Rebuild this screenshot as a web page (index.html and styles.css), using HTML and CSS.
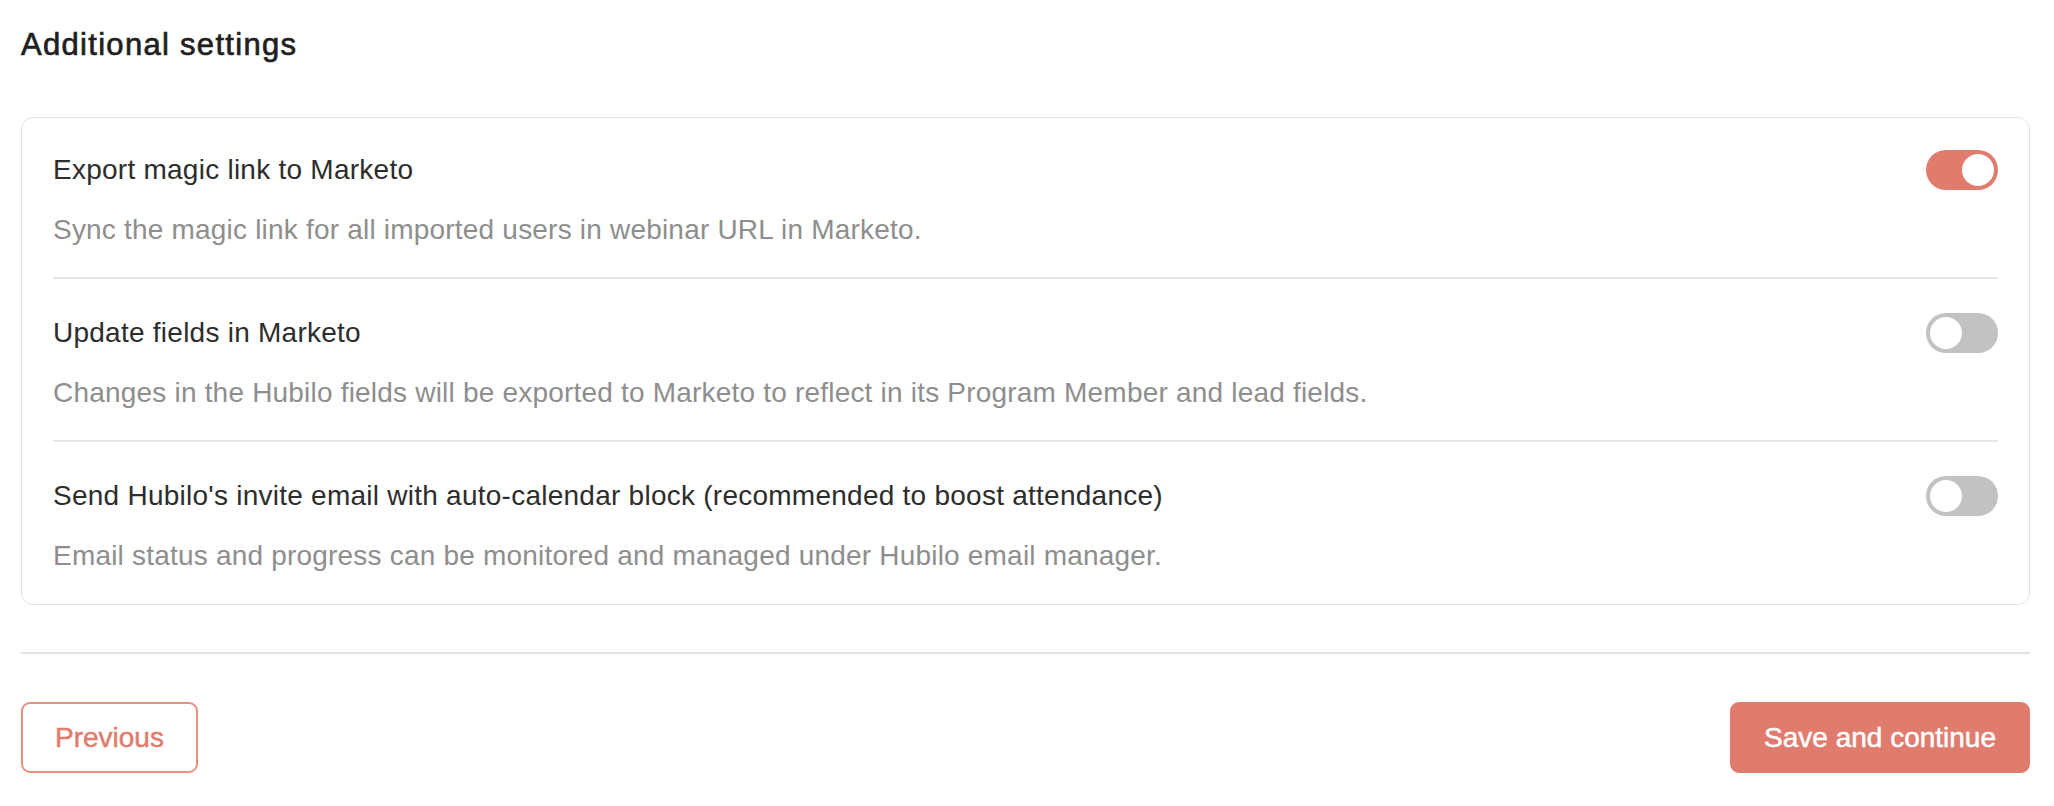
FILE: index.html
```html
<!DOCTYPE html>
<html lang="en">
<head>
<meta charset="utf-8">
<title>Additional settings</title>
<link rel="stylesheet" href="styles.css">
</head>
<body>
<main class="page">
  <h2 class="section-title">Additional settings</h2>

  <section class="settings-card">
    <div class="setting">
      <div class="setting-head">
        <span class="setting-name">Export magic link to Marketo</span>
        <span class="switch is-on" role="switch" aria-checked="true"><span class="knob"></span></span>
      </div>
      <p class="setting-desc">Sync the magic link for all imported users in webinar URL in Marketo.</p>
    </div>
    <div class="setting">
      <div class="setting-head">
        <span class="setting-name">Update fields in Marketo</span>
        <span class="switch" role="switch" aria-checked="false"><span class="knob"></span></span>
      </div>
      <p class="setting-desc">Changes in the Hubilo fields will be exported to Marketo to reflect in its Program Member and lead fields.</p>
    </div>
    <div class="setting">
      <div class="setting-head">
        <span class="setting-name">Send Hubilo's invite email with auto-calendar block (recommended to boost attendance)</span>
        <span class="switch" role="switch" aria-checked="false"><span class="knob"></span></span>
      </div>
      <p class="setting-desc">Email status and progress can be monitored and managed under Hubilo email manager.</p>
    </div>
  </section>

  <footer class="actions">
    <button class="btn btn-outline" type="button">Previous</button>
    <button class="btn btn-primary" type="button">Save and continue</button>
  </footer>
</main>
</body>
</html>
```

FILE: styles.css
```css
* {
  box-sizing: border-box;
}

html,
body {
  margin: 0;
  background: #ffffff;
}

body {
  font-family: "Liberation Sans", Arial, Helvetica, sans-serif;
  color: #2d2d2d;
}

.page {
  padding: 27px 24px 0 21px;
}

/* medium-weight heading: regular face thickened slightly */
.section-title {
  margin: 0;
  font-size: 31px;
  line-height: 36px;
  font-weight: 400;
  letter-spacing: 1.3px;
  -webkit-text-stroke: 0.7px #1f1f1f;
  color: #1f1f1f;
}

.settings-card {
  margin-top: 54px;
  border: 1.5px solid #e2e2e2;
  border-radius: 12px;
  padding: 0 31px;
}

.setting {
  padding: 32px 0 30px;
  border-bottom: 2px solid #e6e6e6;
}

.setting + .setting {
  padding-top: 34px;
}

.setting:last-child {
  border-bottom: none;
  padding-bottom: 31px;
}

.setting-head {
  display: flex;
  align-items: center;
  justify-content: space-between;
  gap: 24px;
}

.setting-name {
  font-size: 28px;
  line-height: 36px;
  letter-spacing: 0.25px;
  color: #2d2d2d;
}

.setting-desc {
  margin: 23px 0 0;
  font-size: 28px;
  line-height: 34px;
  letter-spacing: 0.2px;
  color: #8e8e8e;
}

/* toggle switch */
.switch {
  position: relative;
  flex: none;
  width: 72px;
  height: 40px;
  border-radius: 20px;
  background: #c2c2c2;
}

.switch .knob {
  position: absolute;
  top: 4px;
  left: 4px;
  width: 32px;
  height: 32px;
  border-radius: 50%;
  background: #ffffff;
}

.switch.is-on {
  background: #e07c6e;
}

.switch.is-on .knob {
  left: 36px;
}

.actions {
  margin-top: 47px;
  border-top: 2px solid #e3e3e3;
  padding-top: 48px;
  display: flex;
  justify-content: space-between;
}

.btn {
  height: 71px;
  padding: 0 32px;
  border-radius: 9px;
  font-family: inherit;
  font-size: 28px;
  font-weight: 400;
  -webkit-text-stroke: 0.5px currentColor;
  cursor: pointer;
}

.btn-outline {
  background: #ffffff;
  border: 2px solid #e8907f;
  color: #e07c6e;
}

.btn-primary {
  background: #e07c6e;
  border: 2px solid #e07c6e;
  color: #ffffff;
}
```
